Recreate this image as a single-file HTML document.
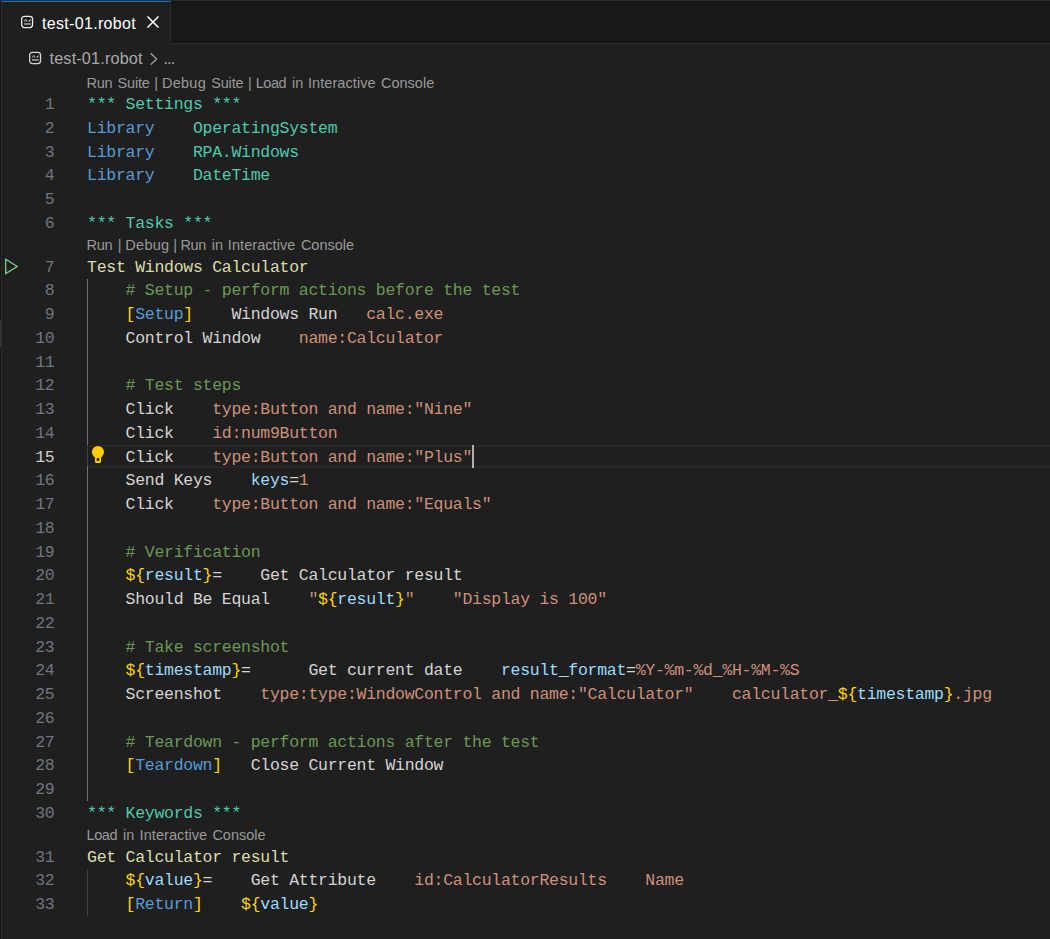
<!DOCTYPE html>
<html lang="en"><head><meta charset="utf-8"><title>test-01.robot</title>
<style>
html,body{margin:0;padding:0;background:#1f1f1f;}
body{width:1050px;height:939px;position:relative;overflow:hidden;font-family:"Liberation Sans",sans-serif;color:#cccccc;}
div{position:absolute;box-sizing:border-box;}
#topline{left:0;top:0;width:1050px;height:1px;background:#2b2b2b;}
#leftstrip{left:0;top:1px;width:2px;height:938px;background:#181818;border-right:1px solid #2b2b2b;}
#sash{left:0;top:320px;width:1px;height:27px;background:#37373d;}
#tabbar{left:2px;top:1px;width:1048px;height:43px;background:#181818;border-bottom:1px solid #2b2b2b;}
#tab{left:2px;top:1px;width:169px;height:43px;background:#1f1f1f;border-right:1px solid #2b2b2b;border-top:1px solid #0078d4;}
#tablabel{left:42px;top:13px;letter-spacing:0.32px;font-size:16px;line-height:22px;color:#ffffff;white-space:pre;}
#crumb{left:49.5px;top:47px;letter-spacing:0.15px;font-size:16.25px;line-height:22px;color:#a9a9a9;white-space:pre;}
#dots{left:163.5px;top:47px;letter-spacing:-0.9px;font-size:16.25px;line-height:22px;color:#a9a9a9;white-space:pre;}
.lens{left:0;width:600px;height:20px;line-height:20px;font-size:14.5px;color:#999999;white-space:pre;}
.lens span{position:absolute;top:0;white-space:pre;}
.ln{left:0;width:54.5px;text-align:right;height:23.75px;line-height:23.75px;font-family:"Liberation Mono",monospace;font-size:16.5px;letter-spacing:-0.2766px;color:#6e7681;white-space:pre;}
.ln.cur{color:#cccccc;}
.cl{left:87px;height:23.75px;line-height:23.75px;font-family:"Liberation Mono",monospace;font-size:16.5px;letter-spacing:-0.2766px;color:#d4d4d4;white-space:pre;}
.t{color:#4ec9b0}.k{color:#569cd6}.f{color:#dcdcaa}.c{color:#6a9955}.b{color:#ffd700}.d{color:#d4d4d4}.s{color:#ce9178}.v{color:#9cdcfe}
#curline{left:88.5px;top:445px;width:963px;height:23px;border-top:2px solid #282828;border-bottom:2px solid #282828;}
#cursor{left:472px;top:445px;width:2.3px;height:23px;background:#aeafad;}
.guide{width:1.25px;}
svg{position:absolute;overflow:visible;}
</style></head>
<body>
<div id="tabbar"></div>
<div id="tab"></div>
<div id="topline"></div>
<div id="leftstrip"></div>
<div id="sash"></div>
<svg style="left:18px;top:12px" width="20" height="20" viewBox="0 0 20 20" fill="none" stroke="#ececec" stroke-linecap="round"><rect x="3.65" y="4.35" width="10.9" height="11.2" rx="2.7" stroke-width="1.3"/><path d="M6.6 9.1 C6.5 7.1 8.9 7.1 8.9 9.2" stroke-width="1"/><path d="M11.1 9.1 L12.3 8.1" stroke-width="1.1"/><rect x="6" y="11.2" width="6.8" height="1.5" fill="#a8a8a8" stroke="none"/></svg>
<div id="tablabel">test-01.robot</div>
<svg style="left:147px;top:16px" width="12" height="12" viewBox="0 0 12 12" stroke="#ffffff" stroke-width="1.5" fill="none"><path d="M0.5 0.5 L11.5 11.5 M11.5 0.5 L0.5 11.5"/></svg>
<svg style="left:25.6px;top:48.1px" width="20" height="20" viewBox="0 0 20 20" fill="none" stroke="#d4d4d4" stroke-linecap="round"><rect x="3.65" y="4.35" width="10.9" height="11.2" rx="2.7" stroke-width="1.3"/><path d="M6.6 9.1 C6.5 7.1 8.9 7.1 8.9 9.2" stroke-width="1"/><path d="M11.1 9.1 L12.3 8.1" stroke-width="1.1"/><rect x="6" y="11.2" width="6.8" height="1.5" fill="#a8a8a8" stroke="none"/></svg>
<div id="crumb">test-01.robot</div>
<svg style="left:150px;top:52.8px" width="8" height="12" viewBox="0 0 8 12" stroke="#a9a9a9" stroke-width="1.3" fill="none"><path d="M0.6 0.2 L6.6 5.9 L0.6 11.6"/></svg>
<div id="dots">...</div>
<div id="curline"></div>
<div class="guide" style="left:86.9px;top:278.5px;height:522.5px;background:#707070"></div>
<div class="guide" style="left:86.9px;top:444.75px;height:20.75px;background:#404040"></div>
<div class="guide" style="left:86.9px;top:868.5px;height:47.5px;background:#404040"></div>
<div class="lens" style="top:72.80px"><span style="left:86.6px;letter-spacing:-0.30px">Run </span><span style="left:117.5px;letter-spacing:-0.17px">Suite </span><span style="left:154.2px">| </span><span style="left:161.9px;letter-spacing:0.28px">Debug </span><span style="left:211.2px;letter-spacing:-0.17px">Suite </span><span style="left:248.1px">| </span><span style="left:255.7px;letter-spacing:-0.43px">Load </span><span style="left:292.0px">in </span><span style="left:308.0px;letter-spacing:0.07px">Interactive </span><span style="left:381.0px">Console</span></div>
<div class="ln" style="top:93.00px">1</div>
<div class="cl" style="top:93.00px"><span class="t">*** Settings ***</span></div>
<div class="ln" style="top:116.75px">2</div>
<div class="cl" style="top:116.75px"><span class="k">Library</span><span class="d">    </span><span class="t">OperatingSystem</span></div>
<div class="ln" style="top:140.50px">3</div>
<div class="cl" style="top:140.50px"><span class="k">Library</span><span class="d">    </span><span class="t">RPA.Windows</span></div>
<div class="ln" style="top:164.25px">4</div>
<div class="cl" style="top:164.25px"><span class="k">Library</span><span class="d">    </span><span class="t">DateTime</span></div>
<div class="ln" style="top:188.00px">5</div>
<div class="ln" style="top:211.75px">6</div>
<div class="cl" style="top:211.75px"><span class="t">*** Tasks ***</span></div>
<div class="lens" style="top:235.30px"><span style="left:86.6px;letter-spacing:-0.30px">Run </span><span style="left:117.8px">| </span><span style="left:125.3px;letter-spacing:0.28px">Debug </span><span style="left:173.3px">| </span><span style="left:180.4px;letter-spacing:-0.30px">Run </span><span style="left:211.7px">in </span><span style="left:227.8px;letter-spacing:0.07px">Interactive </span><span style="left:300.9px">Console</span></div>
<div class="ln" style="top:255.50px">7</div>
<div class="cl" style="top:255.50px"><span class="f">Test Windows Calculator</span></div>
<div class="ln" style="top:279.25px">8</div>
<div class="cl" style="top:279.25px"><span class="d">    </span><span class="c"># Setup - perform actions before the test</span></div>
<div class="ln" style="top:303.00px">9</div>
<div class="cl" style="top:303.00px"><span class="d">    </span><span class="b">[</span><span class="k">Setup</span><span class="b">]</span><span class="d">    Windows Run   </span><span class="s">calc.exe</span></div>
<div class="ln" style="top:326.75px">10</div>
<div class="cl" style="top:326.75px"><span class="d">    Control Window    </span><span class="s">name:Calculator</span></div>
<div class="ln" style="top:350.50px">11</div>
<div class="ln" style="top:374.25px">12</div>
<div class="cl" style="top:374.25px"><span class="d">    </span><span class="c"># Test steps</span></div>
<div class="ln" style="top:398.00px">13</div>
<div class="cl" style="top:398.00px"><span class="d">    Click    </span><span class="s">type:Button and name:"Nine"</span></div>
<div class="ln" style="top:421.75px">14</div>
<div class="cl" style="top:421.75px"><span class="d">    Click    </span><span class="s">id:num9Button</span></div>
<div class="ln cur" style="top:445.50px">15</div>
<div class="cl" style="top:445.50px"><span class="d">    Click    </span><span class="s">type:Button and name:"Plus"</span></div>
<div class="ln" style="top:469.25px">16</div>
<div class="cl" style="top:469.25px"><span class="d">    Send Keys    </span><span class="v">keys</span><span class="d">=</span><span class="s">1</span></div>
<div class="ln" style="top:493.00px">17</div>
<div class="cl" style="top:493.00px"><span class="d">    Click    </span><span class="s">type:Button and name:"Equals"</span></div>
<div class="ln" style="top:516.75px">18</div>
<div class="ln" style="top:540.50px">19</div>
<div class="cl" style="top:540.50px"><span class="d">    </span><span class="c"># Verification</span></div>
<div class="ln" style="top:564.25px">20</div>
<div class="cl" style="top:564.25px"><span class="d">    </span><span class="b">${</span><span class="v">result</span><span class="b">}</span><span class="d">=    Get Calculator result</span></div>
<div class="ln" style="top:588.00px">21</div>
<div class="cl" style="top:588.00px"><span class="d">    Should Be Equal    </span><span class="s">"</span><span class="b">${</span><span class="v">result</span><span class="b">}</span><span class="s">"</span><span class="d">    </span><span class="s">"Display is 100"</span></div>
<div class="ln" style="top:611.75px">22</div>
<div class="ln" style="top:635.50px">23</div>
<div class="cl" style="top:635.50px"><span class="d">    </span><span class="c"># Take screenshot</span></div>
<div class="ln" style="top:659.25px">24</div>
<div class="cl" style="top:659.25px"><span class="d">    </span><span class="b">${</span><span class="v">timestamp</span><span class="b">}</span><span class="d">=      Get current date    </span><span class="v">result_format</span><span class="d">=</span><span class="s">%Y-%m-%d_%H-%M-%S</span></div>
<div class="ln" style="top:683.00px">25</div>
<div class="cl" style="top:683.00px"><span class="d">    Screenshot    </span><span class="s">type:type:WindowControl and name:"Calculator"</span><span class="d">    </span><span class="s">calculator_</span><span class="b">${</span><span class="v">timestamp</span><span class="b">}</span><span class="s">.jpg</span></div>
<div class="ln" style="top:706.75px">26</div>
<div class="ln" style="top:730.50px">27</div>
<div class="cl" style="top:730.50px"><span class="d">    </span><span class="c"># Teardown - perform actions after the test</span></div>
<div class="ln" style="top:754.25px">28</div>
<div class="cl" style="top:754.25px"><span class="d">    </span><span class="b">[</span><span class="k">Teardown</span><span class="b">]</span><span class="d">   Close Current Window</span></div>
<div class="ln" style="top:778.00px">29</div>
<div class="ln" style="top:801.75px">30</div>
<div class="cl" style="top:801.75px"><span class="t">*** Keywords ***</span></div>
<div class="lens" style="top:825.30px"><span style="left:86.6px;letter-spacing:-0.43px">Load </span><span style="left:123.1px">in </span><span style="left:139.6px;letter-spacing:0.07px">Interactive </span><span style="left:212.4px">Console</span></div>
<div class="ln" style="top:845.50px">31</div>
<div class="cl" style="top:845.50px"><span class="f">Get Calculator result</span></div>
<div class="ln" style="top:869.25px">32</div>
<div class="cl" style="top:869.25px"><span class="d">    </span><span class="b">${</span><span class="v">value</span><span class="b">}</span><span class="d">=    Get Attribute    </span><span class="s">id:CalculatorResults</span><span class="d">    </span><span class="s">Name</span></div>
<div class="ln" style="top:893.00px">33</div>
<div class="cl" style="top:893.00px"><span class="d">    </span><span class="b">[</span><span class="k">Return</span><span class="b">]</span><span class="d">    </span><span class="b">${</span><span class="v">value</span><span class="b">}</span></div>
<div id="cursor"></div>
<svg style="left:0px;top:254px" width="24" height="24" viewBox="0 0 24 24" fill="none" stroke="#7fd48a" stroke-width="1.25" stroke-linejoin="miter"><path d="M5.7 5.3 L17.2 12.45 L5.7 19.6 Z"/></svg>
<svg style="left:84px;top:442px" width="28" height="28" viewBox="0 0 28 28"><circle cx="13.95" cy="9.95" r="6.05" fill="#ffcc00"/><path d="M10.9 13 H17.1 V19.6 Q17.1 20.9 15.8 20.9 H12.2 Q10.9 20.9 10.9 19.6 Z" fill="#ffcc00"/><rect x="12.7" y="16.2" width="2.5" height="2.6" fill="#1a1a1a"/></svg>
</body></html>
